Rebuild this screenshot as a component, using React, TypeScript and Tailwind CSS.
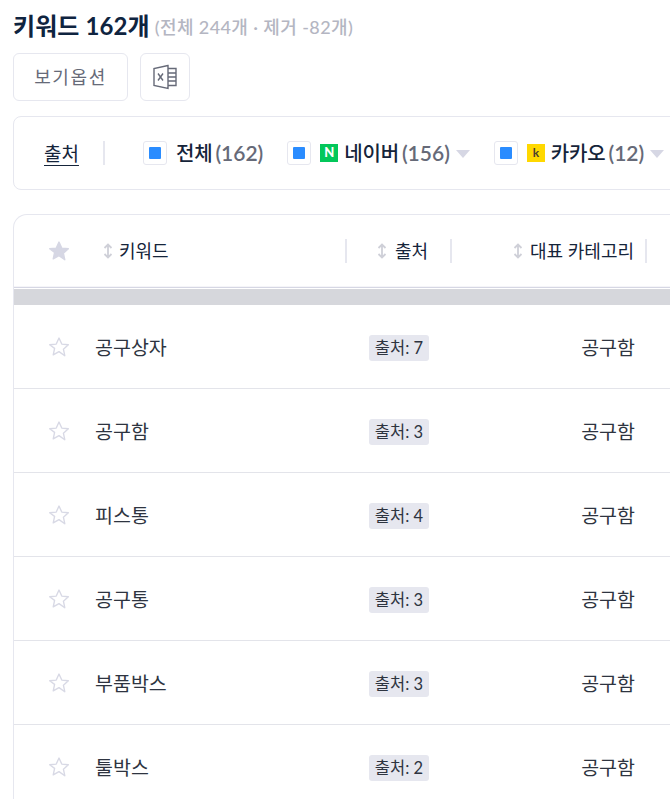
import React from "react";

const font = { fontFamily: '"Lato", "Noto Sans CJK KR", sans-serif' };

const Sort = () => (
  <svg width="10" height="16" viewBox="0 0 10 16" fill="none" stroke="#cfd0d8" strokeWidth="1.8" className="shrink-0">
    <path d="M5 1.500V14.500M1.500 5L5 1.500L8.500 5M1.500 11L5 14.500L8.500 11" />
  </svg>
);

const Star = ({ filled }: { filled?: boolean }) => (
  <svg width="22" height="22" viewBox="0 0 24 24" fill={filled ? "#d6d7e4" : "#ffffff"} stroke={filled ? "#d6d7e4" : "#d8d9e5"} strokeWidth="1.5" strokeLinejoin="round">
    <path d="M12 2.2l3 6.6 7.2.8-5.4 4.8 1.5 7.1L12 17l-6.3 3.6 1.5-7.1L1.8 9.600l7.200-.8z" />
  </svg>
);

const Check = () => (
  <span className="w-6 h-6 bg-white border border-[#e6e7ef] rounded-[3px] flex items-center justify-center shrink-0">
    <span className="w-3 h-3 bg-[#2a8cff] rounded-[1px]" />
  </span>
);

const Caret = () => <span className="w-0 h-0 ml-[6px] mt-[3px] border-x-[7px] border-x-transparent border-t-[8px] border-t-[#d6d7e4] shrink-0" />;

const Source = ({ label, count, logo }: { label: string; count: string; logo: React.ReactNode }) => (
  <div className="flex items-center shrink-0">
    <Check />
    {logo}
    <span className="text-[20px] font-medium text-[#15243a] leading-6 whitespace-nowrap tracking-[-0.2px]">{label}</span>
    <span className="ml-[3px] text-[21px] font-semibold text-[#666a78] leading-6 whitespace-nowrap">({count})</span>
    <Caret />
  </div>
);

const rows = [
  ["공구상자", "7"],
  ["공구함", "3"],
  ["피스통", "4"],
  ["공구통", "3"],
  ["부품박스", "3"],
  ["툴박스", "2"],
];

const Grid = "grid grid-cols-[81px_252px_105px_195px_120px]";

export default function App() {
  return (
    <div style={font} className="w-[670px] h-[799px] overflow-hidden bg-white pl-[13px] pt-[12px]">
      <div className="flex items-center h-[28px] whitespace-nowrap">
        <h1 className="text-[24px] font-bold text-[#0f2440] tracking-[0.1px]">키워드 162개</h1>
        <span className="ml-[5px] mt-[3px] text-[18px] font-medium text-[#b4b6c2] tracking-[0.4px]">(전체 244개 · 제거 -82개)</span>
      </div>

      <div className="flex gap-3 mt-[13px]">
        <button className="w-[115px] h-[48px] border border-[#e6e7ef] rounded-[6px] text-[18px] text-[#666a78] tracking-[1.6px]">보기옵션</button>
        <button className="w-[50px] h-[48px] border border-[#e6e7ef] rounded-[6px] flex items-center justify-center">
          <svg width="24" height="26" viewBox="0 0 24 26" fill="none" stroke="#666a78" strokeWidth="1.400">
            <path d="M15 1.500L1 4.500V21.500L15 24.500V1.500Z" />
            <path d="M15 4.500H23V21.500H15M15 9H23M15 13H23M15 17H23" />
            <path d="M5 9.500L10 16.500M10 9.500L5 16.500" />
          </svg>
        </button>
      </div>

      <div className="w-[700px] h-[74px] mt-[15px] border border-[#e6e7ef] rounded-[8px] flex items-center pl-[30px]">
        <span className="text-[19px] text-[#15243a] underline underline-offset-[4px] leading-6 mt-[2px] shrink-0">출처</span>
        <span className="ml-6 w-[2px] h-6 bg-[#e6e7ef] shrink-0" />
        <div className="flex items-center ml-[38px] gap-[24px] -mt-[1px]">
          <div className="flex items-center shrink-0">
            <Check />
            <span className="ml-[9px] text-[20px] font-medium text-[#15243a] leading-6 tracking-[-0.2px]">전체</span>
            <span className="ml-[3px] text-[21px] font-semibold text-[#666a78] leading-6">(162)</span>
          </div>
          <Source
            label="네이버"
            count="156"
            logo={
              <span className="ml-[9px] mr-[6px] w-[18px] h-[18px] bg-[#03c75a] flex items-center justify-center text-[13px] font-black text-white leading-none">N</span>
            }
          />
          <Source
            label="카카오"
            count="12"
            logo={
              <span className="ml-[9px] mr-[6px] w-[18px] h-[18px] bg-[#ffd800] flex items-center justify-center text-[12px] font-bold text-[#4a4030] leading-none">k</span>
            }
          />
        </div>
      </div>

      <div className="w-[760px] mt-[24px] border-l border-t border-[#e6e7ef] rounded-tl-[14px]">
        <div className={`${Grid} h-[71px] items-center text-[18px] text-[#15243a]`}>
          <div className="flex justify-center pl-[9px]"><Star filled /></div>
          <div className="flex items-center gap-[6px] pl-[8px] h-6 border-r-2 border-[#e6e7ef]"><Sort /><span className="pt-[2px]">키워드</span></div>
          <div className="flex items-center gap-[8px] pl-[30px] h-6 border-r-2 border-[#e6e7ef]"><Sort /><span className="pt-[2px]">출처</span></div>
          <div className="flex items-center justify-end gap-[7px] pr-[11px] h-6 border-r-2 border-[#e6e7ef]"><Sort /><span className="whitespace-nowrap pt-[2px]">대표 카테고리</span></div>
          <div className="flex items-center pl-6 h-6"><Sort /></div>
        </div>
        <div className="h-[1px] bg-[#f5f5f8]" />
        <div className="h-[1px] bg-[#d6d7e4]" />
        <div className="h-[1px] bg-white" />
        <div className="h-[16px] bg-[#d6d7dc]" />
        {rows.map(([name, n]) => (
          <div key={name} className={`${Grid} h-[84px] items-center border-b border-[#e3e4ea] text-[19.500px] text-[#2e3440] box-border`}>
            <div className="flex justify-center pl-[9px]"><Star /></div>
            <div className="whitespace-nowrap pt-[2px]">{name}</div>
            <div className="pl-[22px]">
              <span className="inline-flex items-center justify-center w-[60px] h-[26px] -mt-[2px] bg-[#e6e7ef] rounded-[3px] text-[16.500px] text-[#2e3440] whitespace-nowrap">출처: {n}</span>
            </div>
            <div className="text-right pr-[12px] whitespace-nowrap pt-[2px]">공구함</div>
            <div />
          </div>
        ))}
      </div>
    </div>
  );
}
